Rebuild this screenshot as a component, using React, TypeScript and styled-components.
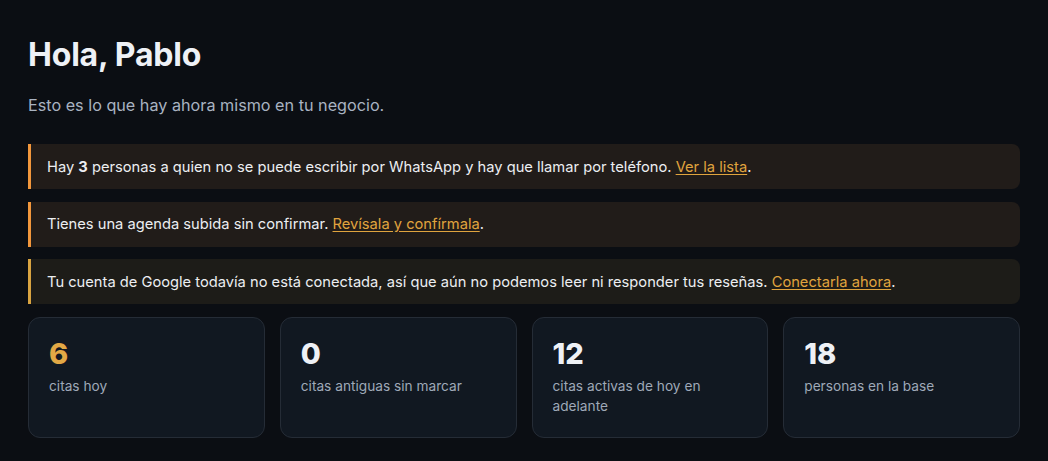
import React from "react";
import styled, { createGlobalStyle } from "styled-components";

const Global = createGlobalStyle`
  html, body { margin: 0; padding: 0; background: #0b0e13; }
  body { font-family: "Inter", "Noto Sans", sans-serif; color: #e6e9ee; }
  * { box-sizing: border-box; }
`;

const Page = styled.main`
  padding: 36px 28px 24px 28px;
  display: flex;
  flex-direction: column;
`;

const Title = styled.h1`
  margin: 0;
  font-size: 32px;
  line-height: 38px;
  font-weight: 700;
  color: #eef1f6;
  letter-spacing: -0.2px;
`;

const Subtitle = styled.p`
  margin: 20px 0 0 0;
  font-size: 16.2px;
  line-height: 22px;
  color: #a9b3c1;
`;

const Alerts = styled.div`
  margin-top: 28px;
  display: flex;
  flex-direction: column;
  gap: 12.5px;
`;

const Alert = styled.div<{ $tone: "orange" | "gold" }>`
  height: 45px;
  display: flex;
  align-items: center;
  padding: 0 16px;
  border-left: 3px solid ${(p) => (p.$tone === "gold" ? "#d9a441" : "#f2973c")};
  border-radius: 0 8px 8px 0;
  background: ${(p) => (p.$tone === "gold" ? "#1d1c18" : "#211c19")};
  font-size: 14.7px;
  color: #eceef1;
`;

const Link = styled.a`
  color: #e0a43e;
  text-decoration: underline;
  text-underline-offset: 2px;
  cursor: pointer;
`;

const Cards = styled.div`
  margin-top: 13px;
  display: grid;
  grid-template-columns: repeat(4, 1fr);
  gap: 15px;
`;

const Card = styled.div`
  height: 121px;
  background: #111821;
  border: 1px solid #252c36;
  border-radius: 12px;
  padding: 19px 20px 0 20px;
  display: flex;
  flex-direction: column;
`;

const Value = styled.div<{ $accent?: boolean }>`
  font-size: 29px;
  line-height: 34px;
  font-weight: 800;
  color: ${(p) => (p.$accent ? "#e2a845" : "#eef1f6")};
`;

const Label = styled.div`
  margin-top: 5px;
  font-size: 13.7px;
  line-height: 20px;
  color: #9fa9b8;
`;

const stats = [
  { value: "6", label: "citas hoy", accent: true },
  { value: "0", label: "citas antiguas sin marcar" },
  { value: "12", label: "citas activas de hoy en adelante" },
  { value: "18", label: "personas en la base" },
];

export default function App() {
  return (
    <>
      <Global />
      <Page>
        <Title>Hola, Pablo</Title>
        <Subtitle>Esto es lo que hay ahora mismo en tu negocio.</Subtitle>
        <Alerts>
          <Alert $tone="orange">
            <span>
              Hay <strong>3</strong> personas a quien no se puede escribir por WhatsApp y hay que llamar por teléfono.{" "}
              <Link>Ver la lista</Link>.
            </span>
          </Alert>
          <Alert $tone="orange">
            <span>
              Tienes una agenda subida sin confirmar. <Link>Revísala y confírmala</Link>.
            </span>
          </Alert>
          <Alert $tone="gold">
            <span>
              Tu cuenta de Google todavía no está conectada, así que aún no podemos leer ni responder tus reseñas.{" "}
              <Link>Conectarla ahora</Link>.
            </span>
          </Alert>
        </Alerts>
        <Cards>
          {stats.map((s) => (
            <Card key={s.value}>
              <Value $accent={s.accent}>{s.value}</Value>
              <Label>{s.label}</Label>
            </Card>
          ))}
        </Cards>
      </Page>
    </>
  );
}
